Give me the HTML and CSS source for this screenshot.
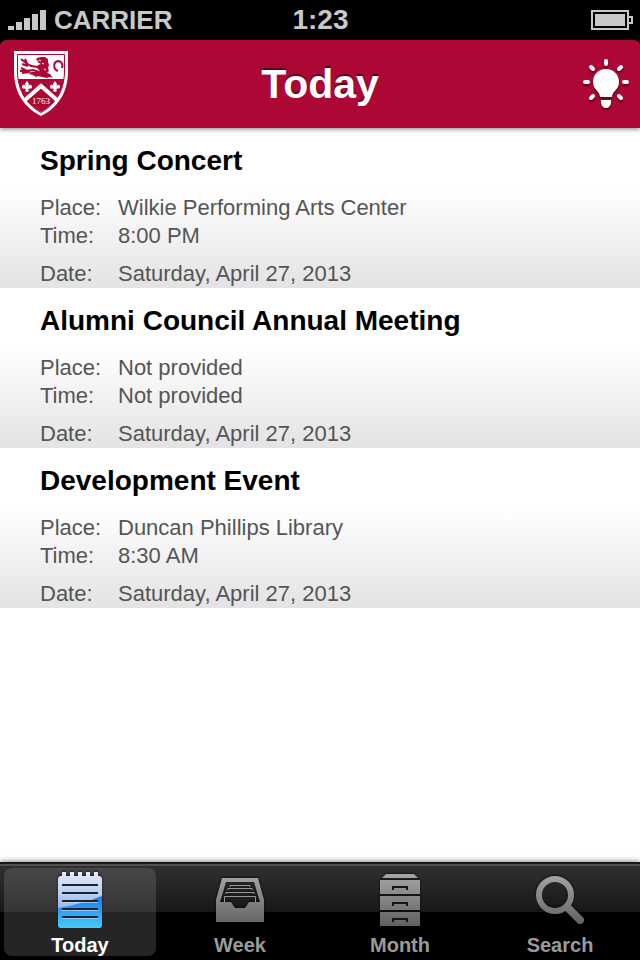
FILE: index.html
```html
<!DOCTYPE html>
<html lang="en">
<head>
<meta charset="utf-8">
<meta name="viewport" content="width=device-width, initial-scale=1">
<title>Today</title>
<link rel="stylesheet" href="styles.css">
</head>
<body>
<div class="top">
<div class="status">
  <div class="carrier">
    <svg width="38" height="20" viewBox="0 0 38 20" fill="#c8c8c8" aria-hidden="true"><path d="M0 16h6v4H0zM8 12h6v8H8zM16 8h6v12h-6zM24 4h6v16h-6zM32 0h6v20h-6z"/></svg>
    <span>CARRIER</span>
  </div>
  <time class="clock">1:23</time>
  <svg class="battery" width="42" height="20" viewBox="0 0 42 20" aria-hidden="true"><path d="M1 1h36v18H1zM38 7h3v6h-3" fill="none" stroke="#c8c8c8" stroke-width="2"/><path d="M4 4h30v12H4z" fill="#c8c8c8"/></svg>
</div>
<header class="navbar">
  <svg class="crest" width="54" height="66" viewBox="0 0 54 66" aria-hidden="true">
    <path d="M0 0H54V20C54 38 47 55 27 65C7 55 0 38 0 20Z" fill="#fff"/>
    <path d="M3.500 3.500H50.500V20C50.500 36 44 52 27 61.500C10 52 3.500 36 3.500 20Z" fill="#fff" stroke="#ad0835"/>
    <path d="M4 28H50C48 43 40 54 27 61C14 54 6 43 4 28Z" fill="#ad0835"/>
    <path d="M11 49L27 35L43 49" fill="none" stroke="#fff" stroke-width="4"/>
    <g fill="#ad0835">
      <path d="M22 9l1-2 4-1 4 0 3 2 0 3 1 3-1 3 1 3-2 2 3 1 3 4-3-1-3 1-5-1-4-1-2 1-3-2-4-1 2-2 4 0 5-1-3-3 1-3 3-1-4-2 2-1z"/>
      <path d="M7 8l5 4 5 3 7 1M8 13l6 2M11 8l2 4M6 20l6 0 7-1 6 2M7 17l6 3M8 22l8-1" fill="none" stroke="#ad0835" stroke-width="2"/>
    </g>
    <path d="M25 9l2 1M28 12l2 1M30 18l2 1" stroke="#fff"/>
    <path d="M44 20C39 18 39 11 44 10C48 10 49 14 48 17" fill="none" stroke="#ad0835" stroke-width="2"/>
    <g fill="#fff">
      <path id="lily" d="M13 30l2 3-1 3c1-3 4-3 4 0 0 2-2 2-2 1l-1 1h-1l1 2-2 1-2-1 1-2h-1l-1-1c0 1-2 1-2-1 0-3 3-3 4 0l-1-3z"/>
      <use href="#lily" x="28"/>
    </g>
    <text x="27" y="53" class="crest-year">1763</text>
  </svg>
  <h1>Today</h1>
  <button class="tips" type="button" aria-label="Tips">
    <svg width="48" height="52" viewBox="0 0 48 52" aria-hidden="true">
      <g fill="#fff">
        <path d="M24 11C16 11 11 17 11 24C11 32 18 33 18 39H30C30 33 37 32 37 24C37 17 32 11 24 11Z"/>
        <path d="M19 42H29V45Q28 50 24 50Q20 50 19 45Z"/>
      </g>
      <path d="M24 3v3M9 9l2 2M39 9l-2 2M3 24h3M42 24h3M9 40l2-2M39 40l-2-2" fill="none" stroke="#fff" stroke-width="4" stroke-linecap="round"/>
    </svg>
  </button>
</header>
</div>
<main>
  <article class="event">
    <h2>Spring Concert</h2>
    <dl>
      <dt>Place:</dt><dd>Wilkie Performing Arts Center</dd>
      <dt>Time:</dt><dd>8:00 PM</dd>
      <dt class="date">Date:</dt><dd class="date">Saturday, April 27, 2013</dd>
    </dl>
  </article>
  <article class="event">
    <h2>Alumni Council Annual Meeting</h2>
    <dl>
      <dt>Place:</dt><dd>Not provided</dd>
      <dt>Time:</dt><dd>Not provided</dd>
      <dt class="date">Date:</dt><dd class="date">Saturday, April 27, 2013</dd>
    </dl>
  </article>
  <article class="event">
    <h2>Development Event</h2>
    <dl>
      <dt>Place:</dt><dd>Duncan Phillips Library</dd>
      <dt>Time:</dt><dd>8:30 AM</dd>
      <dt class="date">Date:</dt><dd class="date">Saturday, April 27, 2013</dd>
    </dl>
  </article>
</main>
<nav class="tabbar">
  <a class="tab selected" href="#today" aria-current="page">
    <svg width="60" height="60" viewBox="0 0 60 60" aria-hidden="true">
      <defs>
        <linearGradient id="pale" x1="0" y1="0" x2="0" y2="1"><stop offset="0" stop-color="#e3ecfb"/><stop offset="1" stop-color="#6f9ee8"/></linearGradient>
        <linearGradient id="blue" x1="0" y1="0" x2="0" y2="1"><stop offset="0" stop-color="#1c78f0"/><stop offset="1" stop-color="#43ccff"/></linearGradient>
      </defs>
      <path d="M10 6h2V2h4v4h4V2h4v4h4V2h4v4h4V2h4v4h4V2h4v4h2l2 2v48l-2 2H10l-2-2V8z" fill="url(#pale)"/>
      <path d="M8 38Q32 34 52 26V56L50 58H10L8 56Z" fill="url(#blue)"/>
      <path d="M12 16.500h36M12 24.500h36M12 32.500h36M12 40.500h36M12 48.500h36" stroke="#b9dcff" stroke-opacity=".7"/>
      <path d="M12 15h36M12 23h36M12 31h36M12 39h36M12 47h36" stroke="#202224" stroke-width="2"/>
    </svg>
    <span>Today</span>
  </a>
  <a class="tab" href="#week">
    <svg width="60" height="60" viewBox="0 0 60 60" aria-hidden="true">
      <defs><linearGradient id="gray" gradientUnits="userSpaceOnUse" x1="0" y1="4" x2="0" y2="56"><stop offset="0" stop-color="#a6a6a6"/><stop offset="1" stop-color="#606060"/></linearGradient></defs>
      <path fill="url(#gray)" fill-rule="evenodd" d="M12 8H48L54 30V52H6V30ZM16 12L10 32H21L25 38H35L39 32H50L44 12Z"/>
      <path d="M20 17v-1.500h20V17M18 20v-1.500h24V20M16 24v-1.500h28V24M14.500 32v-5.500h31V32" fill="none" stroke="#999"/>
    </svg>
    <span>Week</span>
  </a>
  <a class="tab" href="#month">
    <svg width="60" height="60" viewBox="0 0 60 60" aria-hidden="true">
      <path fill="url(#gray)" d="M16 4H44L48 8H12ZM10 10H50V24H10ZM10 26H50V40H10ZM10 42H50V56H10Z"/>
      <path d="M23 20v-3h14v3M23 36v-3h14v3M23 52v-3h14v3" fill="none" stroke="#161616" stroke-width="2"/>
    </svg>
    <span>Month</span>
  </a>
  <a class="tab" href="#search">
    <svg width="60" height="60" viewBox="0 0 60 60" aria-hidden="true">
      <g fill="none" stroke="url(#gray)"><circle cx="25" cy="25" r="16" stroke-width="6"/><path d="M38 38L50 50" stroke-width="8" stroke-linecap="round"/></g>
    </svg>
    <span>Search</span>
  </a>
</nav>
</body>
</html>
```
FILE: styles.css
```css
* { box-sizing: border-box; }

body {
  margin: 0;
  min-height: 100vh;
  display: flex;
  flex-direction: column;
  background: #fff;
  font-family: "Liberation Sans", Arial, sans-serif;
}

h1, h2, dl, dd { margin: 0; }
svg { display: block; }

.top {
  position: relative;
  background: #000;
  box-shadow: 0 1px 5px rgba(0, 0, 0, .5);
}
.status {
  height: 40px;
  padding: 0 7px 0 8px;
  display: grid;
  grid-template-columns: 1fr auto 1fr;
  align-items: center;
  color: #c8c8c8;
  font-weight: bold;
}
.carrier { display: flex; align-items: center; gap: 8px; font-size: 26px; line-height: 38px; }
.clock { font-size: 28px; line-height: 38px; }
.battery { justify-self: end; }

.navbar {
  height: 88px;
  padding: 0 10px;
  display: grid;
  grid-template-columns: 1fr auto 1fr;
  align-items: center;
  color: #fff;
  background: #ad0835;
  border-radius: 6px 6px 0 0;
}
.navbar h1 { font-size: 41px; line-height: 88px; text-shadow: 0 -2px 1px rgba(60, 0, 15, .7); }
.crest { margin-left: 4px; }
.crest-year { font: 9px "Liberation Serif", serif; fill: #fff; text-anchor: middle; }
.tips {
  justify-self: end;
  padding: 0;
  border: 0;
  background: none;
  filter: drop-shadow(0 2px 1px rgba(50, 0, 10, .7));
}

main { flex: 1; }
.event {
  padding: 17px 40px 0;
  background: linear-gradient(#fff 38%, #e3e3e3);
}
.event h2 { font-size: 28px; line-height: 32px; color: #000; }
.event dl {
  margin-top: 17px;
  display: grid;
  grid-template-columns: 78px 1fr;
  color: #555;
  font-size: 22px;
  line-height: 28px;
}
.event .date { margin-top: 10px; }

.tabbar {
  display: grid;
  grid-template-columns: repeat(4, 1fr);
  height: 98px;
  padding: 4px 0;
  border-top: 2px solid #161819;
  background: linear-gradient(#505050 0 2px, #303030 2px, #171717 48px, #000 48px);
  box-shadow: 0 -1px 5px rgba(0, 0, 0, .45);
}
.tab {
  margin: 0 4px;
  padding-top: 2px;
  display: flex;
  flex-direction: column;
  align-items: center;
  border-radius: 8px;
  color: #9a9a9a;
  font-size: 20px;
  font-weight: bold;
  line-height: 22px;
  text-decoration: none;
}
.tab svg { filter: drop-shadow(0 -1px 1px rgba(0, 0, 0, .6)); }
.tab span { margin-top: 4px; }
.tab.selected {
  color: #fff;
  background: linear-gradient(#474747, #353535 44px, #252525 44px);
}
```
